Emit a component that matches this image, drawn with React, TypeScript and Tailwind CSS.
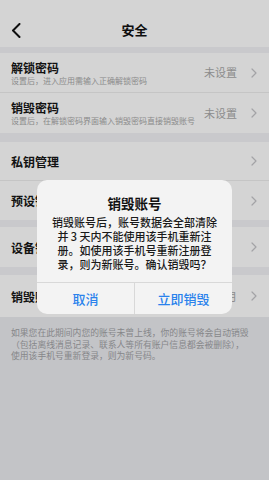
import React from 'react';

const Chevron = () => (
  <svg width="6" height="10" viewBox="0 0 6 10" fill="none">
    <path d="M1 1l4 4-4 4" stroke="#c4c4c8" strokeWidth="1.2" strokeLinecap="round" strokeLinejoin="round" />
  </svg>
);

function Row({ title, sub, value, h = 'h-[40px]', line = false }: { title: string; sub?: string; value?: string; h?: string; line?: boolean }) {
  return (
    <div className={`${h} bg-white pl-[11px] pr-[12px] flex items-center justify-between ${line ? 'border-b border-[#ededed]' : ''}`}>
      <div className="flex flex-col justify-center">
        <div className="text-[12px] leading-[15px] font-semibold text-[#161616] whitespace-nowrap">{title}</div>
        {sub && <div className="text-[8px] leading-[11px] text-[#a8a8a8] whitespace-nowrap">{sub}</div>}
      </div>
      <div className="flex items-center gap-[14px]">
        {value && <span className="text-[11px] text-[#a9a9a9] whitespace-nowrap">{value}</span>}
        <Chevron />
      </div>
    </div>
  );
}

export default function App() {
  return (
    <div className="relative w-[269px] h-[480px] overflow-hidden bg-[#ebecf0] font-['Noto_Sans_CJK_SC',sans-serif]">
      {/* header */}
      <div className="relative h-[47px] bg-white flex items-center justify-center pt-[12px]">
        <svg className="absolute left-[11px] top-[23px]" width="10" height="15" viewBox="0 0 10 15" fill="none">
          <path d="M8.5 1L2 7.5 8.5 14" stroke="#111" strokeWidth="2" strokeLinecap="round" strokeLinejoin="round" />
        </svg>
        <span className="text-[13px] font-semibold text-[#111]">安全</span>
      </div>
      <div className="h-[6px] bg-[#f2f2f6]" />
      <Row title="解锁密码" sub="设置后，进入应用需输入正确解锁密码" value="未设置" line />
      <Row title="销毁密码" sub="设置后，在解锁密码界面输入销毁密码直接销毁账号" value="未设置" />
      <div className="h-[9px] bg-[#f2f2f6]" />
      <Row title="私钥管理" h="h-[39px]" line />
      <Row title="预设销毁时间" h="h-[39px]" />
      <div className="h-[7px] bg-[#f2f2f6]" />
      <Row title="设备锁" />
      <div className="h-[8px] bg-[#f2f2f6]" />
      <Row title="销毁账号" value="3个月" h="h-[42px]" />
      <div className="pl-[11px] pt-[10px] text-[8.8px] leading-[11.6px] text-[#a2a3a6]">
        <div className="whitespace-nowrap">如果您在此期间内您的账号未曾上线，你的账号将会自动销毁</div>
        <div className="whitespace-nowrap">（包括离线消息记录、联系人等所有账户信息都会被删除），</div>
        <div className="whitespace-nowrap">使用该手机号重新登录，则为新号码。</div>
      </div>

      {/* dim overlay + dialog */}
      <div className="absolute inset-0 bg-black/[0.17] flex justify-center pt-[180px]">
        <div className="w-[195px] h-[134px] rounded-[10px] bg-[#f3f3f3] flex flex-col overflow-hidden">
          <div className="pt-[14px] text-center text-[13.5px] leading-[18px] font-semibold text-[#111]">销毁账号</div>
          <div className="mt-[3px] text-center text-[11px] leading-[14px] font-medium text-[#1a1a1a]">
            <div>销毁账号后，账号数据会全部清除</div>
            <div>并 3 天内不能使用该手机重新注</div>
            <div>册。如使用该手机号重新注册登</div>
            <div>录，则为新账号。确认销毁吗？</div>
          </div>
          <div className="mt-auto h-[32px] border-t border-[#d8d8d8] flex">
            <button className="flex-1 text-[13px] font-medium text-[#2a82ec]">取消</button>
            <div className="w-px bg-[#d8d8d8]" />
            <button className="flex-1 text-[13px] font-medium text-[#2a82ec]">立即销毁</button>
          </div>
        </div>
      </div>
    </div>
  );
}
